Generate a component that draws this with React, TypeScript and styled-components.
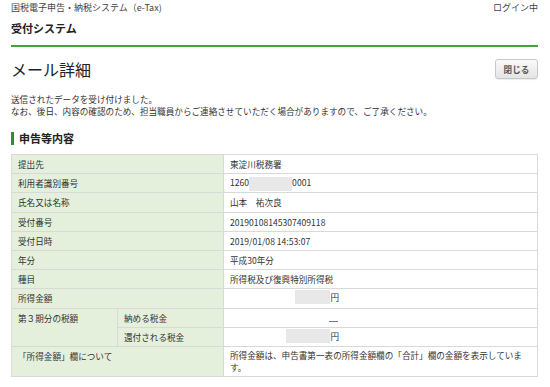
import React from "react";
import styled, { createGlobalStyle } from "styled-components";

const GlobalStyle = createGlobalStyle`
  body {
    margin: 0;
    background-color: #ffffff;
    font-family: "Noto Sans CJK JP", "Liberation Sans", sans-serif;
    color: #333333;
  }
`;

const Page = styled.div`
  width: 550px;
  padding: 0 12px 0 11px;
  box-sizing: border-box;
`;

const Header = styled.header`
  border-bottom: 2px solid #44a13b;
  padding-top: 2px;
  padding-bottom: 10px;
`;

const HeaderTop = styled.div`
  display: flex;
  justify-content: space-between;
  align-items: center;

  font-size: 9px;
  line-height: 12px;
  color: #444444;
`;

const SystemName = styled.div`
  margin-top: 7px;

  font-size: 11px;
  line-height: 14px;
  font-weight: bold;
  color: #222222;
`;

const TitleRow = styled.div`
  display: flex;
  justify-content: space-between;
  align-items: center;

  margin-top: 11px;
`;

const Title = styled.h1`
  margin: 0;

  font-size: 16px;
  line-height: 22px;
  font-weight: normal;
  color: #222222;
`;

const CloseButton = styled.button`
  width: 43px;
  height: 20px;
  padding: 0;

  background: linear-gradient(#fafafa, #e4e4e4);
  border: 1px solid #c8c8c8;
  border-radius: 3px;
  box-shadow: 0 1px 1px rgba(0, 0, 0, 0.08);

  font-family: "Noto Sans CJK JP", "Liberation Sans", sans-serif;
  font-size: 8.6px;
  font-weight: bold;
  color: #555555;
`;

const Message = styled.p`
  margin: 13px 0 0;

  font-size: 8.6px;
  line-height: 12px;
`;

const SectionTitle = styled.h2`
  display: flex;
  align-items: center;
  gap: 5px;

  margin: 14px 0 0;

  font-size: 11px;
  line-height: 14px;
  font-weight: bold;
  color: #222222;

  &::before {
    content: "";
    width: 3px;
    height: 13px;
    background-color: #2f8f2f;
  }
`;

const Table = styled.table`
  width: 527px;
  margin-top: 9px;

  border-collapse: collapse;
  table-layout: fixed;

  font-size: 8.6px;
`;

const Label = styled.th`
  height: 19.2px;
  padding: 0 6px;
  box-sizing: border-box;

  background-color: #e5f0dc;
  border: 1px solid #d9d9d9;

  text-align: left;
  font-weight: normal;
  vertical-align: middle;
`;

const Value = styled.td`
  height: 19.2px;
  padding: 0 6px;
  box-sizing: border-box;

  border: 1px solid #d9d9d9;

  vertical-align: middle;
`;

const TallLabel = styled(Label)`
  height: 30px;
  vertical-align: top;
  padding-top: 3px;
`;

const TallValue = styled(Value)`
  height: 30px;
  padding-top: 2px;
  line-height: 12px;
  vertical-align: top;
`;

const Masked = styled.span<{ $width: number }>`
  display: inline-block;
  width: ${(p) => p.$width}px;
  height: 14px;

  background-color: #e8e8e8;
  vertical-align: middle;
`;

const Amount = styled.span`
  display: inline-flex;
  justify-content: flex-end;
  align-items: center;

  width: 109px;
`;

const Dash = styled.span`
  display: inline-block;
  width: 9px;
  height: 1px;
  margin-right: 1px;

  background-color: #777777;
`;

export default function App() {
  return (
    <Page>
      <GlobalStyle />
      <Header>
        <HeaderTop>
          <span>国税電子申告・納税システム（e-Tax)</span>
          <span>ログイン中</span>
        </HeaderTop>
        <SystemName>受付システム</SystemName>
      </Header>

      <TitleRow>
        <Title>メール詳細</Title>
        <CloseButton>閉じる</CloseButton>
      </TitleRow>

      <Message>
        送信されたデータを受け付けました。
        <br />
        なお、後日、内容の確認のため、担当職員からご連絡させていただく場合がありますので、ご了承ください。
      </Message>

      <SectionTitle>申告等内容</SectionTitle>

      <Table>
        <colgroup>
          <col style={{ width: 106 }} />
          <col style={{ width: 106 }} />
          <col />
        </colgroup>
        <tbody>
          <tr>
            <Label colSpan={2}>提出先</Label>
            <Value>東淀川税務署</Value>
          </tr>
          <tr>
            <Label colSpan={2}>利用者識別番号</Label>
            <Value>
              1260
              <Masked $width={43} />
              0001
            </Value>
          </tr>
          <tr>
            <Label colSpan={2}>氏名又は名称</Label>
            <Value>山本　祐次良</Value>
          </tr>
          <tr>
            <Label colSpan={2}>受付番号</Label>
            <Value>20190108145307409118</Value>
          </tr>
          <tr>
            <Label colSpan={2}>受付日時</Label>
            <Value>2019/01/08 14:53:07</Value>
          </tr>
          <tr>
            <Label colSpan={2}>年分</Label>
            <Value>平成30年分</Value>
          </tr>
          <tr>
            <Label colSpan={2}>種目</Label>
            <Value>所得税及び復興特別所得税</Value>
          </tr>
          <tr>
            <Label colSpan={2}>所得金額</Label>
            <Value>
              <Amount>
                <Masked $width={35} />
                円
              </Amount>
            </Value>
          </tr>
          <tr>
            <TallLabel rowSpan={2} style={{ height: "auto" }}>
              第３期分の税額
            </TallLabel>
            <Label>納める税金</Label>
            <Value>
              <Amount>
                <Dash />
              </Amount>
            </Value>
          </tr>
          <tr>
            <Label>還付される税金</Label>
            <Value>
              <Amount>
                <Masked $width={44} />
                円
              </Amount>
            </Value>
          </tr>
          <tr>
            <TallLabel colSpan={2}>「所得金額」欄について</TallLabel>
            <TallValue>
              所得金額は、申告書第一表の所得金額欄の「合計」欄の金額を表示しています。
            </TallValue>
          </tr>
        </tbody>
      </Table>
    </Page>
  );
}
